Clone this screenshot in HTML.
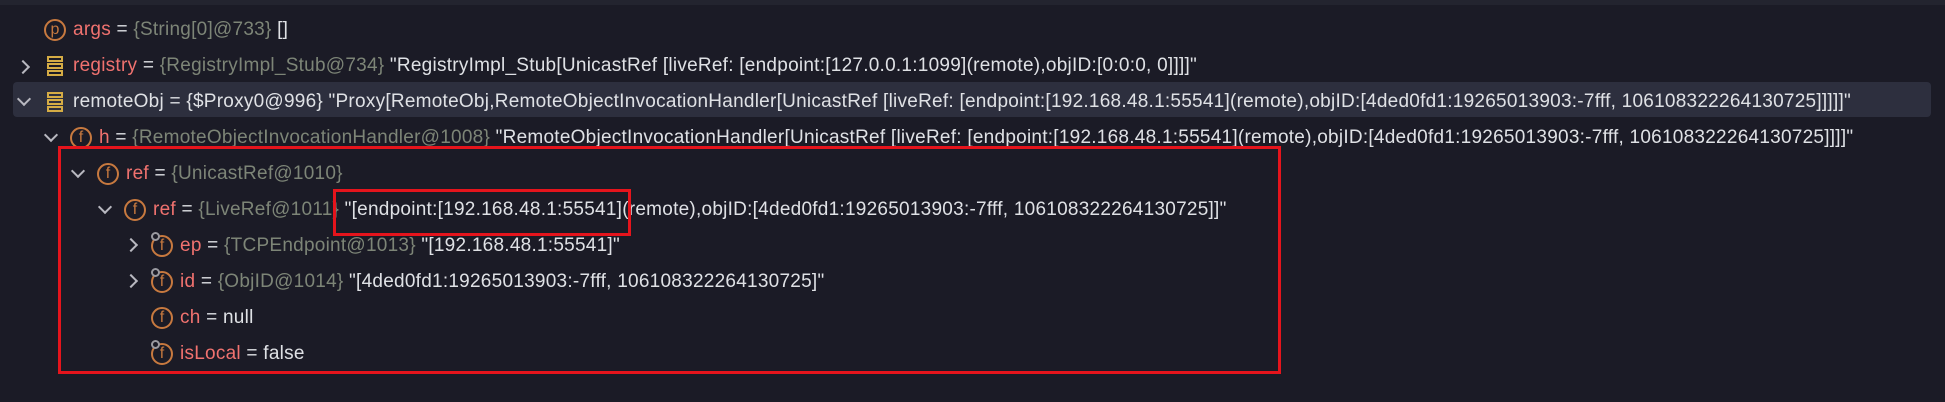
<!DOCTYPE html>
<html><head><meta charset="utf-8"><style>
html,body{margin:0;padding:0;background:#1b1b26;width:1945px;height:402px;overflow:hidden;font-family:"Liberation Sans",sans-serif;font-size:19px;letter-spacing:0.25px;}
.top{position:absolute;left:0;top:0;width:1945px;height:5px;background:#23242f}
.band{position:absolute;left:13px;top:82px;width:1918px;height:35px;background:#2d2f3e;border-radius:4px}
.row{position:absolute;height:36px;line-height:36px;white-space:nowrap;color:#dfe1e5}
.n{color:#f0726f}.t{color:#7d8577}
.chev{position:absolute;width:8px;height:8px;border-right:2px solid #b8b8c0;border-bottom:2px solid #b8b8c0}
.ico{position:absolute;width:22px;height:22px;border:2px solid #c7793f;border-radius:50%;box-sizing:border-box;color:#c7793f;font-size:16px;letter-spacing:0;line-height:18px;text-align:center}
.key{position:absolute;width:9px;height:9px;border:2px solid #9a9aa0;border-radius:50%;box-sizing:border-box;background:#1b1b26}
.red{position:absolute;border:3px solid #e5141c;box-sizing:border-box}
</style></head><body>
<div class="top"></div>
<div class="band"></div>

<div class="ico" style="left:44px;top:19px">p</div>
<div class="row" style="left:73px;top:12px"><span class="n">args</span> = <span class="t">{String[0]@733}</span> []</div>

<div class="chev" style="left:18px;top:62px;transform:rotate(-45deg)"></div>
<svg style="position:absolute;left:46px;top:55px" width="18" height="22"><g fill="none" stroke="#d5ac45" stroke-width="2"><rect x="2" y="2" width="14" height="4"/><rect x="2" y="9" width="14" height="4"/><rect x="2" y="16" width="14" height="4"/></g></svg>
<div class="row" style="left:73px;top:48px"><span class="n">registry</span> = <span class="t">{RegistryImpl_Stub@734}</span> "RegistryImpl_Stub[UnicastRef [liveRef: [endpoint:[127.0.0.1:1099](remote),objID:[0:0:0, 0]]]]"</div>

<div class="chev" style="left:19px;top:94px;transform:rotate(45deg)"></div>
<svg style="position:absolute;left:46px;top:91px" width="18" height="22"><g fill="none" stroke="#d5ac45" stroke-width="2"><rect x="2" y="2" width="14" height="4"/><rect x="2" y="9" width="14" height="4"/><rect x="2" y="16" width="14" height="4"/></g></svg>
<div class="row" style="left:73px;top:84px">remoteObj = {$Proxy0@996} "Proxy[RemoteObj,RemoteObjectInvocationHandler[UnicastRef [liveRef: [endpoint:[192.168.48.1:55541](remote),objID:[4ded0fd1:19265013903:-7fff, 106108322264130725]]]]]"</div>

<div class="chev" style="left:46px;top:130px;transform:rotate(45deg)"></div>
<div class="ico" style="left:70px;top:127px">f</div>
<div class="row" style="left:99px;top:120px"><span class="n">h</span> = <span class="t">{RemoteObjectInvocationHandler@1008}</span> "RemoteObjectInvocationHandler[UnicastRef [liveRef: [endpoint:[192.168.48.1:55541](remote),objID:[4ded0fd1:19265013903:-7fff, 106108322264130725]]]]"</div>

<div class="chev" style="left:73px;top:166px;transform:rotate(45deg)"></div>
<div class="ico" style="left:97px;top:163px">f</div>
<div class="row" style="left:126px;top:156px"><span class="n">ref</span> = <span class="t">{UnicastRef@1010}</span></div>

<div class="chev" style="left:100px;top:202px;transform:rotate(45deg)"></div>
<div class="ico" style="left:124px;top:199px">f</div>
<div class="row" style="left:153px;top:192px"><span class="n">ref</span> = <span class="t">{LiveRef@1011}</span> "[endpoint:[192.168.48.1:55541](remote),objID:[4ded0fd1:19265013903:-7fff, 106108322264130725]]"</div>

<div class="chev" style="left:126px;top:240px;transform:rotate(-45deg)"></div>
<div class="ico" style="left:151px;top:235px">f</div><div class="key" style="left:151px;top:232px"></div>
<div class="row" style="left:180px;top:228px"><span class="n">ep</span> = <span class="t">{TCPEndpoint@1013}</span> "[192.168.48.1:55541]"</div>

<div class="chev" style="left:126px;top:276px;transform:rotate(-45deg)"></div>
<div class="ico" style="left:151px;top:271px">f</div><div class="key" style="left:151px;top:268px"></div>
<div class="row" style="left:180px;top:264px"><span class="n">id</span> = <span class="t">{ObjID@1014}</span> "[4ded0fd1:19265013903:-7fff, 106108322264130725]"</div>

<div class="ico" style="left:151px;top:307px">f</div>
<div class="row" style="left:180px;top:300px"><span class="n">ch</span> = null</div>

<div class="ico" style="left:151px;top:343px">f</div><div class="key" style="left:151px;top:340px"></div>
<div class="row" style="left:180px;top:336px"><span class="n">isLocal</span> = false</div>

<div class="red" style="left:58px;top:146px;width:1223px;height:228px"></div>
<div class="red" style="left:333px;top:189px;width:298px;height:47px"></div>
</body></html>
